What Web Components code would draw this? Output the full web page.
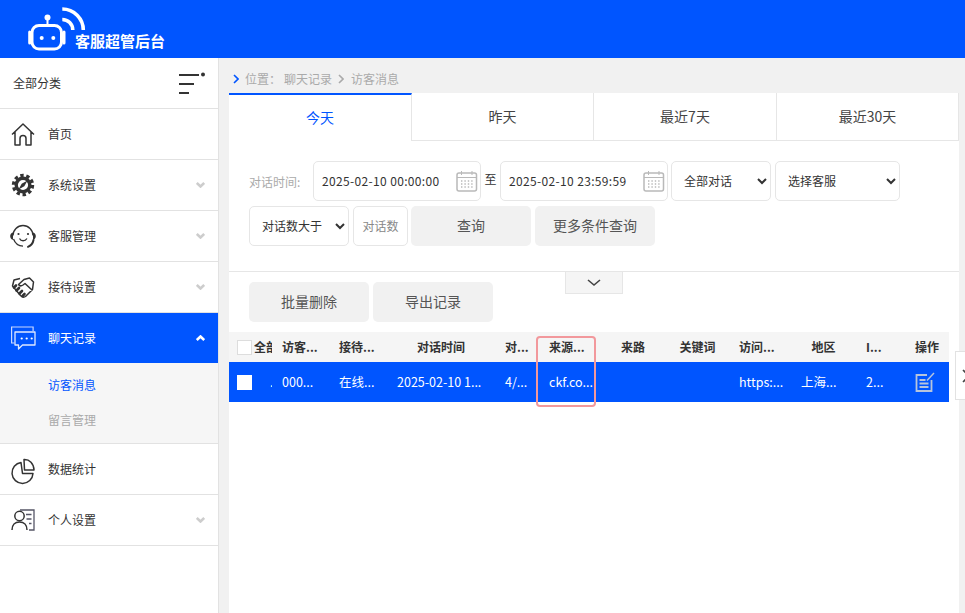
<!DOCTYPE html>
<html lang="zh">
<head>
<meta charset="utf-8">
<title>客服超管后台</title>
<style>
  html, body { margin: 0; height: 100%; overflow: hidden; }
  body { font: 12px "Noto Sans CJK SC", "Noto Sans", sans-serif; color: #333; background: #f1f1f1; }
</style>
</head>
<body>
<app-shell>
  <app-header slot="top">客服超管后台</app-header>
  <side-menu slot="side">
    <menu-item icon="home">首页</menu-item>
    <menu-item icon="gear" arrow="down">系统设置</menu-item>
    <menu-item icon="headset" arrow="down">客服管理</menu-item>
    <menu-item icon="shake" arrow="down">接待设置</menu-item>
    <menu-item icon="chat" arrow="up" active>聊天记录</menu-item>
    <sub-menu>
      <sub-item current>访客消息</sub-item>
      <sub-item>留言管理</sub-item>
    </sub-menu>
    <menu-item icon="pie">数据统计</menu-item>
    <menu-item icon="person" arrow="down">个人设置</menu-item>
  </side-menu>
  <crumb-bar slot="main"></crumb-bar>
  <content-panel slot="main">
    <tab-bar></tab-bar>
    <filter-form></filter-form>
    <action-bar></action-bar>
    <record-table></record-table>
  </content-panel>
  <side-handle slot="main"></side-handle>
</app-shell>

<script>
const ICONS = {
  home: `<path d="M1 12.500 12 2l11 10.500M4 10v13h5v-6.500a3 3 0 0 1 6 0V23h5V10" fill="none" stroke="currentColor" stroke-width="1.500" stroke-linejoin="round"/>`,
  gear: `<circle cx="12" cy="12" r="9.600" fill="none" stroke="currentColor" stroke-width="3.200" stroke-dasharray="3.400 2.630"/>
    <circle cx="12" cy="12" r="6.800" fill="none" stroke="currentColor" stroke-width="3.400"/>
    <path d="M16.500 7.500 13.300 13.300 7.500 16.500 10.700 10.700Z" fill="currentColor"/>`,
  headset: `<path d="M2 11.500a10 10 0 0 1 20 0" fill="none" stroke="currentColor" stroke-width="1.400"/>
    <path d="M2.500 15c1.500 4 5 7 9.500 7.200" fill="none" stroke="currentColor" stroke-width="1.300"/>
    <path d="M2 8.500C0 9-1 10.800-.8 12.500c.2 1.800 1.300 3 2.800 3.300ZM22 8.500c2 .5 3 2.300 2.800 4-.2 1.800-1.300 3-2.800 3.300Z" fill="currentColor"/>
    <circle cx="7.500" cy="10" r="1.100" fill="currentColor"/><circle cx="17" cy="10" r="1.100" fill="currentColor"/>
    <path d="M8.500 14.500c1.500 3 5.500 3 7.500 0" fill="none" stroke="currentColor" stroke-width="1.300"/>
    <path d="M22.500 16c-.5 3-2.500 5.500-5.500 6.800" fill="none" stroke="currentColor" stroke-width="2" stroke-linecap="round"/>`,
  shake: `<path d="M9 3.500 3 5 1.500 11l8 9.500c1.500 1.500 3.500 2 5 1l7-7 1-7.500L18.500 3 13 4.500l-5.500 5c1 1.500 3 1.500 4.500.5l2-1.500 7.500 7" fill="none" stroke="currentColor" stroke-width="1.500" stroke-linejoin="round"/>
    <path d="M3 12.500 5 10.500M5.500 15.500 8 13M8.500 18.500 11 16M11.500 21l2-2" stroke="currentColor" stroke-width="2.600" stroke-linecap="round"/>`,
  chat: `<path d="M3.500 17H.6V1h21.500v4" fill="none" stroke="#c9d8ff" stroke-width="1.200"/>
    <path d="M4 6h20v13H11.500L7.500 23v-4H4Z" fill="none" stroke="#dfe8ff" stroke-width="1.300" stroke-linejoin="round"/>
    <circle cx="10.700" cy="12.500" r="1.100" fill="#fff"/><circle cx="15.700" cy="12.500" r="1.100" fill="#fff"/><circle cx="20.700" cy="12.500" r="1.100" fill="#fff"/>`,
  pie: `<path d="M10 5.500a10.500 10.500 0 1 0 12 11H11.500Z" fill="none" stroke="currentColor" stroke-width="1.500" stroke-linejoin="round"/>
    <path d="M13 2.500c5.500-.3 9.800 4 10 10.500H13.500Z" fill="none" stroke="currentColor" stroke-width="1.500" stroke-linejoin="round"/>`,
  person: `<circle cx="8.500" cy="8" r="4.700" fill="none" stroke="currentColor" stroke-width="1.500"/>
    <path d="M1 22c0-5 3-8 7.500-8s7.500 3 7.500 8" fill="none" stroke="currentColor" stroke-width="1.500"/>
    <path d="M9 2h14v20h-5M15 6.500h5.500M15.500 11h5M18 15.500h2.500" fill="none" stroke="#556" stroke-width="1.300"/>`
};

// small helper so each element is just name + css + html
function comp(tag, css, html, init) {
  customElements.define(tag, class extends HTMLElement {
    constructor() {
      super();
      const shadow = this.attachShadow({ mode: "open" });
      const body = typeof html === "function" ? html(this) : html;
      shadow.innerHTML = `<style>${css}</style>${body}`;
    }
    connectedCallback() { if (init) init(this); }
  });
}

comp("app-shell", `
  :host { display: grid; grid-template: 58px 555px / 219px 746px; width: 965px; height: 613px; overflow: hidden; }
  .top { grid-column: 1 / 3; display: block; }
  .main { display: flex; flex-direction: column; padding-left: 10px; position: relative; min-width: 0; }
`, `
  <div class="top"><slot name="top"></slot></div>
  <div><slot name="side"></slot></div>
  <div class="main"><slot name="main"></slot></div>
`);

comp("app-header", `
  :host { display: flex; height: 58px; background: #0055ff; color: #fff; position: relative; font: bold 15px "Noto Sans CJK SC", sans-serif; }
  svg { position: absolute; left: 26px; top: 4px; }
  span { position: absolute; left: 75px; top: 30px; line-height: 22px; }
`, `
  <svg width="62" height="48" viewBox="0 0 62 48" fill="none" stroke="#fff">
    <rect x="6" y="21.500" width="29.500" height="23.500" rx="7" stroke-width="3"/>
    <path d="M3.700 28v11M38 28v11" stroke-width="3" stroke-linecap="round"/>
    <path d="M21.500 21V14" stroke-width="2"/>
    <circle cx="21.500" cy="13.500" r="3" fill="#fff" stroke="none"/>
    <circle cx="15.700" cy="34" r="2" fill="#fff" stroke="none"/>
    <circle cx="27.300" cy="34" r="2" fill="#fff" stroke="none"/>
    <path d="M36.300 15.500a10.500 10.500 0 0 1 10.500 10.500" stroke-width="3.600"/>
    <path d="M36.300 5a21 21 0 0 1 21 21" stroke-width="3.600"/>
  </svg>
  <span><slot></slot></span>
`);

comp("side-menu", `
  :host { display: block; width: 218px; height: 555px; background: #fff; border-right: 1px solid #e2e2e2; }
  .head { height: 50px; border-bottom: 1px solid #e2e2e2; display: flex; align-items: center; justify-content: space-between; padding: 0 12px 0 13px; color: #333; }
  .head span { padding-bottom: 2px; }
`, `
  <div class="head">
    <span>全部分类</span>
    <svg width="27" height="22" viewBox="0 0 27 22" stroke="#333" stroke-width="2">
      <path d="M0 3h20M0 12h15M0 21h10"/><circle cx="24" cy="2.500" r="2" fill="#333" stroke="none"/>
    </svg>
  </div>
  <slot></slot>
`);

comp("menu-item", `
  :host { display: flex; align-items: center; height: 50px; border-bottom: 1px solid #e2e2e2; color: #333; position: relative; }
  :host([active]) { background: #0055ff; color: #fff; border-bottom: 0; }
  svg.ic { width: 24px; height: 24px; margin: 0 13px 0 11px; flex: none; overflow: visible; }
  span { flex: 1; padding-bottom: 2px; }
  svg.ar { margin-right: 13px; width: 9px; height: 6px; fill: none; stroke: #cdcdcd; stroke-width: 2.600; }
  :host([active]) svg.ar { stroke: #fff; }
`, (el) => {
  const a = el.getAttribute("arrow");
  const arrow = a ? `<svg class="ar" viewBox="0 0 9 6"><path d="${a === "up" ? "M.8 5 4.500 1.500 8.200 5" : "M.8 1 4.500 4.500 8.200 1"}"/></svg>` : "";
  return `<svg class="ic" viewBox="0 0 24 24">${ICONS[el.getAttribute("icon")]}</svg><span><slot></slot></span>${arrow}`;
});

comp("sub-menu", `
  :host { display: block; padding-top: 4px; box-sizing: border-box; background: #f6f6f6; border-bottom: 1px solid #e2e2e2; height: 81px; }
`, `<slot></slot>`);

comp("sub-item", `
  :host { display: block; height: 35px; line-height: 35px; padding-left: 48px; color: #aaa; }
  :host([current]) { color: #0055ff; }
`, `<slot></slot>`);

comp("crumb-bar", `
  :host { display: flex; align-items: center; height: 35px; padding: 8px 0 2px 4px; box-sizing: border-box; color: #aaa; flex: none; }
  svg { fill: none; stroke-width: 1.600; }
  .b { stroke: #0055ff; margin-right: 6px; }
  .g { stroke: #aaa; margin: 0 7px 0 6px; }
  .pos { margin-right: 3px; }
`, `
  <svg class="b" width="6" height="10" viewBox="0 0 6 10"><path d="M1 1l4 4-4 4"/></svg>
  <span class="pos">位置：</span><span>聊天记录</span>
  <svg class="g" width="6" height="10" viewBox="0 0 6 10"><path d="M1 1l4 4-4 4"/></svg>
  <span>访客消息</span>
`);

comp("content-panel", `
  :host { display: block; width: 730px; height: 520px; background: #fff; position: relative; }
`, `<slot></slot>`);

comp("tab-bar", `
  :host { display: grid; grid-template-columns: 183px 182px 183px 182px; height: 48px; font-size: 14px; color: #444; text-align: center; }
  div { border-right: 1px solid #e6e6e6; border-bottom: 1px solid #e6e6e6; line-height: 47px; box-sizing: border-box; }
  .on { color: #0055ff; border-bottom: 0; border-top: 2px solid #0055ff; line-height: 45px; }
`, `<div class="on">今天</div><div>昨天</div><div>最近7天</div><div>最近30天</div>`);

comp("date-field", `
  :host { display: flex; align-items: center; justify-content: space-between; width: 168px; height: 40px; box-sizing: border-box; padding: 0 2px 2px 8px; border: 1px solid #e6e6e6; border-radius: 5px; color: #333; font-size: 12px; letter-spacing: .35px; }
  svg { fill: none; stroke: #b9b9b9; margin-top: 2px; }
`, `
  <slot></slot>
  <svg width="22" height="22" viewBox="0 0 22 22">
    <rect x="1" y="3" width="19.500" height="18" rx="2" stroke-width="1.500"/>
    <path d="M1 7.500h19.500" stroke-width="1"/><path d="M5.500 1v4M16 1v4" stroke-width="1"/>
    <path d="M5 11h12M5 14h12M5 17h12" stroke-width="1.400" stroke-dasharray="1.400 2"/>
  </svg>
`);

comp("pick-box", `
  :host { display: block; }
  select { display: block; height: 40px; width: var(--w, 100px); padding: 0 4px 2px 8px; border: 1px solid #e6e6e6; border-radius: 5px; background: #fff; color: #333; font: 12px "Noto Sans CJK SC", sans-serif; outline: 0; }
`, (el) => `<select>${el.getAttribute("items").split(",").map((t) => `<option>${t}</option>`).join("")}</select>`);

comp("flat-btn", `
  :host { display: flex; align-items: center; justify-content: center; width: 120px; height: 40px; box-sizing: border-box; padding-bottom: 2px; background: #f1f1f1; border-radius: 5px; color: #555; font-size: 14px; flex: none; }
`, `<slot></slot>`);

comp("filter-form", `
  :host { display: block; height: 131px; padding: 20px 0 0 20px; box-sizing: border-box; border-bottom: 1px solid #e6e6e6; }
  .row { display: flex; align-items: center; height: 40px; margin-bottom: 5px; }
  .lab { width: 64px; color: #aaa; padding-top: 1px; box-sizing: border-box; }
  .to { width: 19px; text-align: center; padding-bottom: 5px; }
  .count { width: 55px; height: 40px; box-sizing: border-box; padding-bottom: 2px; border: 1px solid #e6e6e6; border-radius: 5px; color: #888; display: flex; align-items: center; justify-content: center; margin: 0 3px 0 4px; }
  flat-btn + flat-btn { margin-left: 4px; }
  .s1 { --w: 100px; margin-left: 3px; }
  .s2 { --w: 125px; margin-left: 4px; }
  .s3 { --w: 100px; }
`, `
  <div class="row">
    <span class="lab">对话时间:</span>
    <date-field>2025-02-10 00:00:00</date-field>
    <span class="to">至</span>
    <date-field>2025-02-10 23:59:59</date-field>
    <pick-box class="s1" items="全部对话,已结束,进行中"></pick-box>
    <pick-box class="s2" items="选择客服"></pick-box>
  </div>
  <div class="row">
    <pick-box class="s3" items="对话数大于,对话数小于"></pick-box>
    <span class="count">对话数</span>
    <flat-btn>查询</flat-btn>
    <flat-btn>更多条件查询</flat-btn>
  </div>
`);

comp("action-bar", `
  :host { display: flex; gap: 4px; padding: 10px 0 10px 20px; position: relative; }
  flat-btn { font-size: 14px; }
  .fold { position: absolute; left: 336px; top: 0; width: 58px; height: 22px; box-sizing: border-box; background: #f5f5f5; border: 1px solid #e6e6e6; border-top: 0; display: flex; align-items: center; justify-content: center; }
`, `
  <flat-btn>批量删除</flat-btn>
  <flat-btn>导出记录</flat-btn>
  <div class="fold"><svg width="14" height="8" viewBox="0 0 14 8" fill="none" stroke="#444" stroke-width="1.600"><path d="M1 1l6 5 6-5"/></svg></div>
`);

const COLS = [25, 18, 57, 58, 108, 44, 61, 66, 63, 62, 65, 49, 44];
const HEAD = ["", "全部", "访客...", "接待...", "对话时间", "对...", "来源...", "来路", "关键词", "访问...", "地区", "I...", "操作"];
const ROW = ["", ".", "000...", "在线...", "2025-02-10 1...", "4/...", "ckf.co...", "", "", "https:...", "上海...", "2...", ""];
const CENTER_HEAD = [4, 7, 8, 10, 12];

comp("record-table", `
  :host { display: block; width: 720px; position: relative; }
  .tr { display: grid; grid-template-columns: ${COLS.map((c) => c + "px").join(" ")}; align-items: center; white-space: nowrap; }
  .th { height: 30px; background: #f5f5f5; font-weight: bold; color: #333; }
  .td { height: 40px; background: #0055ff; color: #fff; font-size: 12.500px; }
  .c { padding: 0 0 2px 10px; overflow: hidden; box-sizing: border-box; }
  .c.mid { padding-left: 0; text-align: center; }
  .c.tight { padding-left: 0; }
  .box { width: 15px; height: 15px; margin-left: 8px; background: #fff; box-sizing: border-box; }
  .th .box { border: 1px solid #ddd; }
  .mark { position: absolute; left: 307px; top: 4px; width: 60px; height: 71px; box-sizing: border-box; border: 2px solid #f2989c; border-radius: 4px; }
  .op { margin-left: 10px; display: block; }
`, `
  <div class="tr th">
    ${HEAD.map((t, i) => i === 0 ? `<div><div class="box"></div></div>`
      : `<div class="c ${CENTER_HEAD.includes(i) ? "mid" : ""} ${i === 1 ? "tight" : ""}">${t}</div>`).join("")}
  </div>
  <div class="tr td">
    ${ROW.map((t, i) => {
      if (i === 0) return `<div><div class="box"></div></div>`;
      if (i === 12) return `<div><svg class="op" width="20" height="20" viewBox="0 0 20 20" fill="none" stroke="#b6c4dc" stroke-width="1.800"><path d="M12 3H1.500v16h15V8M4.500 8h6M4.500 11.500h9M4.500 15h9"/><path d="M12 8.500 19 1" stroke-width="1.500"/></svg></div>`;
      return `<div class="c ${i === 1 ? "tight" : ""}" ${i === 1 ? 'style="padding-left:16px"' : ""}>${t}</div>`;
    }).join("")}
  </div>
  <div class="mark"></div>
`);

comp("side-handle", `
  :host { position: absolute; left: 736px; top: 293px; width: 12px; height: 49px; background: #fff; border: 1px solid #e2e2e2; border-right: 0; box-sizing: border-box; display: flex; align-items: center; }
  svg { margin-left: 6px; flex: none; }
`, `<svg width="8" height="14" viewBox="0 0 8 14" fill="none" stroke="#444" stroke-width="1.600"><path d="M1 1l6 6-6 6"/></svg>`);
</script>
</body>
</html>
